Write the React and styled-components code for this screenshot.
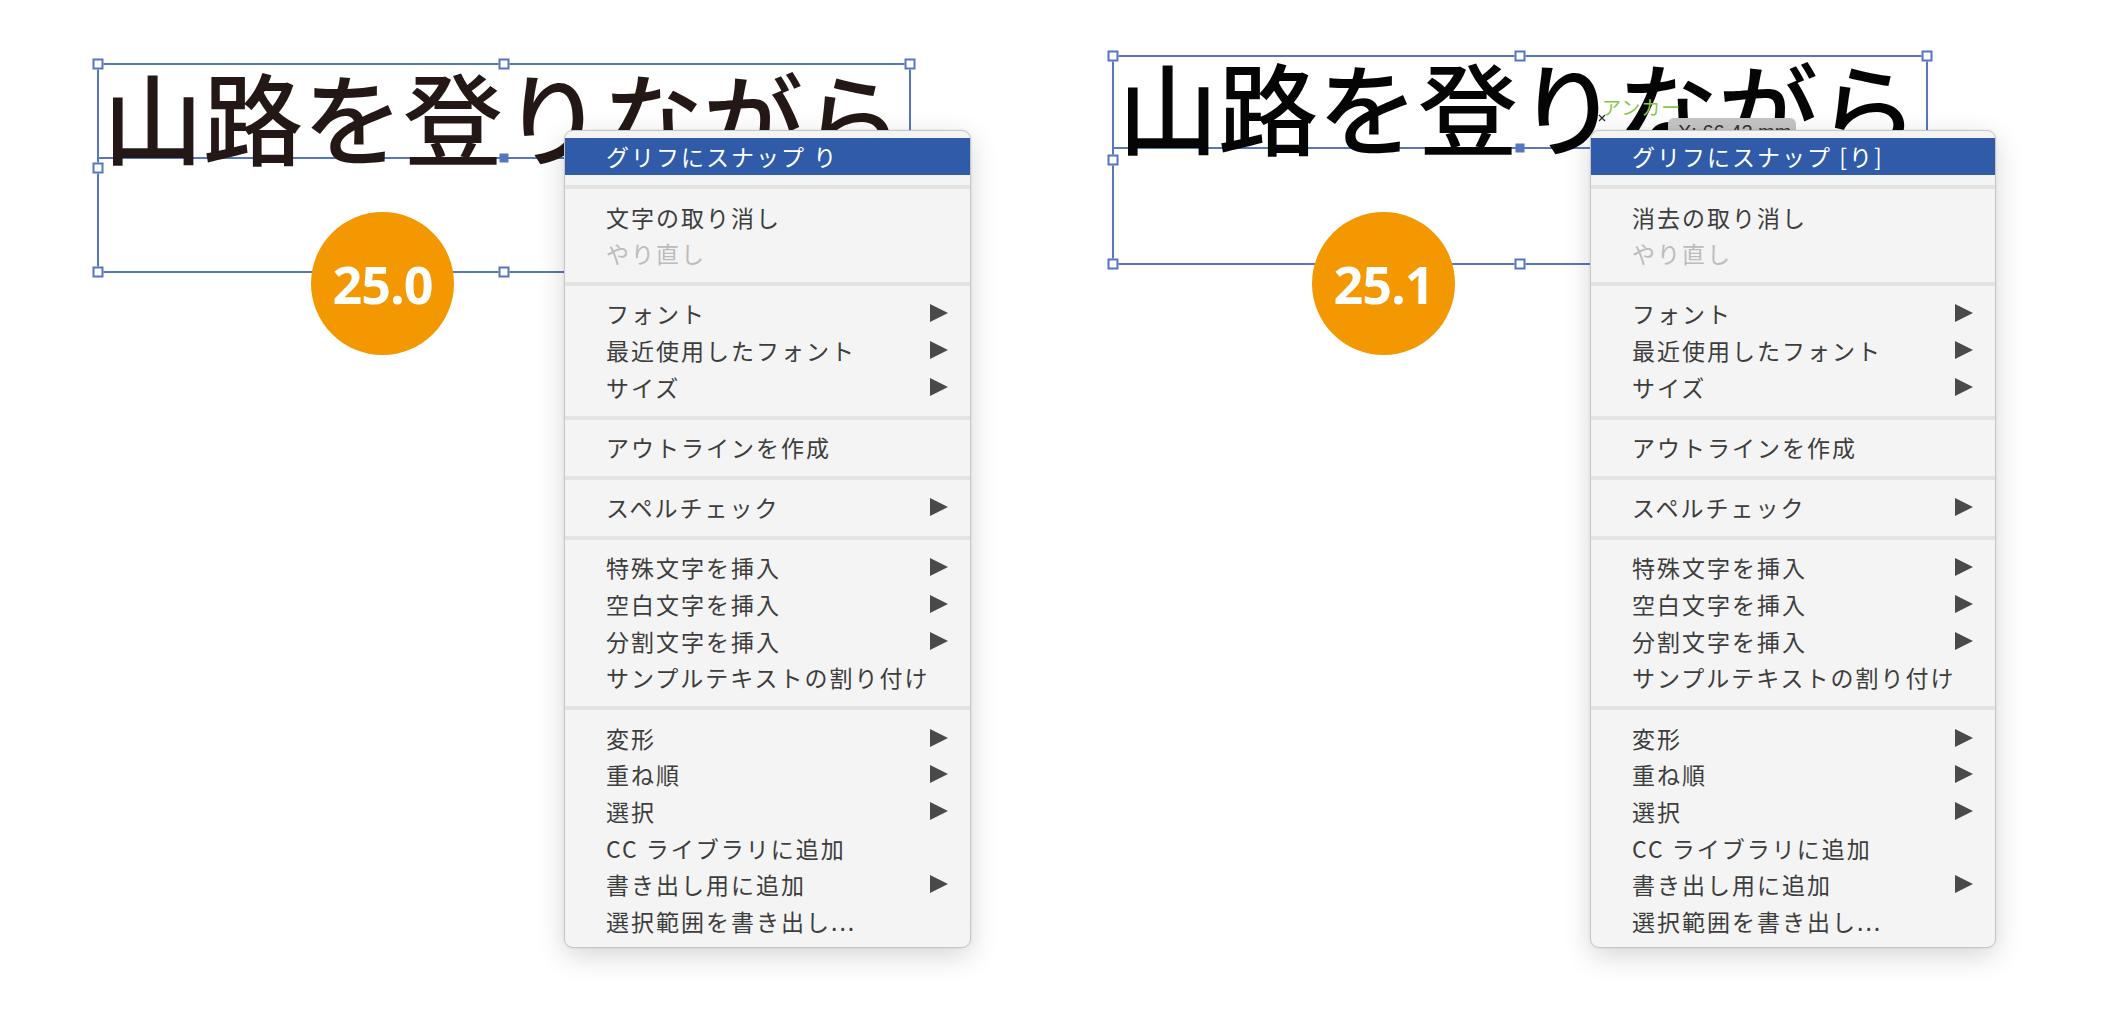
import React from "react";
import styled, { createGlobalStyle } from "styled-components";

const GlobalStyle = createGlobalStyle`
  html, body {
    margin: 0;
    padding: 0;
    background: #fff;
  }
  body {
    font-family: "Noto Sans CJK JP", "Liberation Sans", sans-serif;
  }
`;

const LINE = "#5676bf";

const Page = styled.main`
  display: flex;
  width: 2112px;
  height: 1030px;
  overflow: hidden;
  background: #fff;
`;

const Panel = styled.section`
  position: relative;
  flex: 0 0 ${(p) => p.$width}px;
  box-sizing: border-box;
  padding: ${(p) => p.$top}px 0 0 97px;
`;

const Frame = styled.div`
  position: relative;
  box-sizing: border-box;
  width: ${(p) => p.$width}px;
  height: 210px;
  border: 2px solid ${LINE};
`;

const TextLine = styled.div`
  display: flex;
  align-items: flex-end;
  height: ${(p) => p.$baseline}px;
  padding-left: 4px;
  border-bottom: 2px solid ${LINE};
`;

const BigText = styled.span`
  font-family: "Noto Sans CJK JP", sans-serif;
  font-size: 100px;
  font-weight: 500;
  line-height: 100px;
  margin-bottom: -8px;
  color: ${(p) => p.$color};
  white-space: nowrap;
`;

const HandleLayer = styled.div`
  position: absolute;
  inset: -1px;
  pointer-events: none;
`;

const Handle = styled.span`
  position: absolute;
  box-sizing: border-box;
  width: 11px;
  height: 11px;
  background: #fff;
  border: 2px solid ${LINE};
  transform: translate(-50%, -50%);
`;

const Anchor = styled.span`
  position: absolute;
  left: 50%;
  width: 9px;
  height: 9px;
  background: ${LINE};
  transform: translate(-50%, -50%);
`;

const Badge = styled.div`
  position: absolute;
  left: ${(p) => p.$left}px;
  top: 212px;
  width: 143px;
  height: 143px;
  border-radius: 50%;
  background: #f39800;
  color: #fff;
  display: flex;
  align-items: center;
  justify-content: center;
  font-family: "Open Sans", "Liberation Sans", sans-serif;
  font-weight: 700;
  font-size: 52px;
  letter-spacing: -1px;
  z-index: 2;
`;

const Menu = styled.ul`
  position: absolute;
  left: ${(p) => p.$left}px;
  top: 130px;
  width: ${(p) => p.$width}px;
  box-sizing: border-box;
  margin: 0;
  padding: 7px 0 8px;
  list-style: none;
  background: #f4f4f4;
  border: 1px solid #c6c6c6;
  border-radius: 9px;
  box-shadow: 0 8px 28px rgba(0, 0, 0, 0.16), 0 0 3px rgba(0, 0, 0, 0.08);
  z-index: 5;
`;

const Item = styled.li`
  display: flex;
  align-items: center;
  justify-content: space-between;
  height: 36.7px;
  padding: 0 22px 0 41px;
  font-size: 23px;
  letter-spacing: 2px;
  white-space: pre;
  color: ${(p) => (p.$active ? "#fff" : p.$disabled ? "#bcbcbc" : "#3d3d3d")};
  background: ${(p) => (p.$active ? "#2f5ba8" : "transparent")};
`;

const Separator = styled.li`
  height: 4px;
  margin: 10.5px 0 9px;
  background: #e3e3e1;
`;

const Arrow = styled.svg`
  flex: none;
  width: 18px;
  height: 18px;
`;

const AnchorLabel = styled.span`
  position: absolute;
  left: 587px;
  top: 93px;
  font-size: 19px;
  color: #8cc54a;
  letter-spacing: 1px;
  white-space: nowrap;
  z-index: 1;
`;

const Cursor = styled.svg`
  position: absolute;
  left: 583px;
  top: 114px;
  width: 8px;
  height: 8px;
  z-index: 1;
`;

const Tooltip = styled.div`
  position: absolute;
  left: 653px;
  top: 118px;
  width: 128px;
  height: 40px;
  box-sizing: border-box;
  padding: 3px 0 0 10px;
  background: #c5c5c5;
  border-radius: 6px;
  font-family: "Liberation Sans", sans-serif;
  font-size: 20px;
  color: #333;
  white-space: nowrap;
  z-index: 1;
`;

const handles = [
  [0, 0],
  [50, 0],
  [100, 0],
  [0, 50],
  [100, 50],
  [0, 100],
  [50, 100],
  [100, 100],
];

const buildMenu = (snap, undo) => [
  { label: snap, active: true },
  "sep",
  { label: undo },
  { label: "やり直し", disabled: true },
  "sep",
  { label: "フォント", sub: true },
  { label: "最近使用したフォント", sub: true },
  { label: "サイズ", sub: true },
  "sep",
  { label: "アウトラインを作成" },
  "sep",
  { label: "スペルチェック", sub: true },
  "sep",
  { label: "特殊文字を挿入", sub: true },
  { label: "空白文字を挿入", sub: true },
  { label: "分割文字を挿入", sub: true },
  { label: "サンプルテキストの割り付け" },
  "sep",
  { label: "変形", sub: true },
  { label: "重ね順", sub: true },
  { label: "選択", sub: true },
  { label: "CC ライブラリに追加" },
  { label: "書き出し用に追加", sub: true },
  { label: "選択範囲を書き出し..." },
];

const ContextMenu = ({ items, left, width }) => (
  <Menu $left={left} $width={width}>
    {items.map((item, i) =>
      item === "sep" ? (
        <Separator key={i} />
      ) : (
        <Item key={i} $active={item.active} $disabled={item.disabled}>
          <span>{item.label}</span>
          {item.sub && (
            <Arrow viewBox="0 0 18 18">
              <polygon points="0,0 18,9 0,18" fill="#4a4a4a" />
            </Arrow>
          )}
        </Item>
      )
    )}
  </Menu>
);

const TextFrame = ({ width, baseline, color }) => (
  <Frame $width={width}>
    <TextLine $baseline={baseline}>
      <BigText $color={color}>山路を登りながら</BigText>
    </TextLine>
    <HandleLayer>
      {handles.map(([x, y]) => (
        <Handle key={`${x}-${y}`} style={{ left: `${x}%`, top: `${y}%` }} />
      ))}
      <Anchor style={{ top: baseline + 2 }} />
    </HandleLayer>
  </Frame>
);

const App = () => (
  <>
    <GlobalStyle />
    <Page>
      <Panel $width={1015} $top={63}>
        <TextFrame width={814} baseline={92} color="#231815" />
        <Badge $left={311}>25.0</Badge>
        <ContextMenu
          items={buildMenu("グリフにスナップ り", "文字の取り消し")}
          left={564}
          width={407}
        />
      </Panel>
      <Panel $width={1097} $top={55}>
        <TextFrame width={816} baseline={90} color="#050505" />
        <AnchorLabel>アンカー</AnchorLabel>
        <Cursor viewBox="0 0 8 8">
          <path d="M1 1 L7 7 M7 1 L1 7" stroke="#222" strokeWidth="1.2" />
        </Cursor>
        <Tooltip>X: 66.42 mm</Tooltip>
        <Badge $left={297}>25.1</Badge>
        <ContextMenu
          items={buildMenu("グリフにスナップ [り]", "消去の取り消し")}
          left={575}
          width={406}
        />
      </Panel>
    </Page>
  </>
);

export default App;
